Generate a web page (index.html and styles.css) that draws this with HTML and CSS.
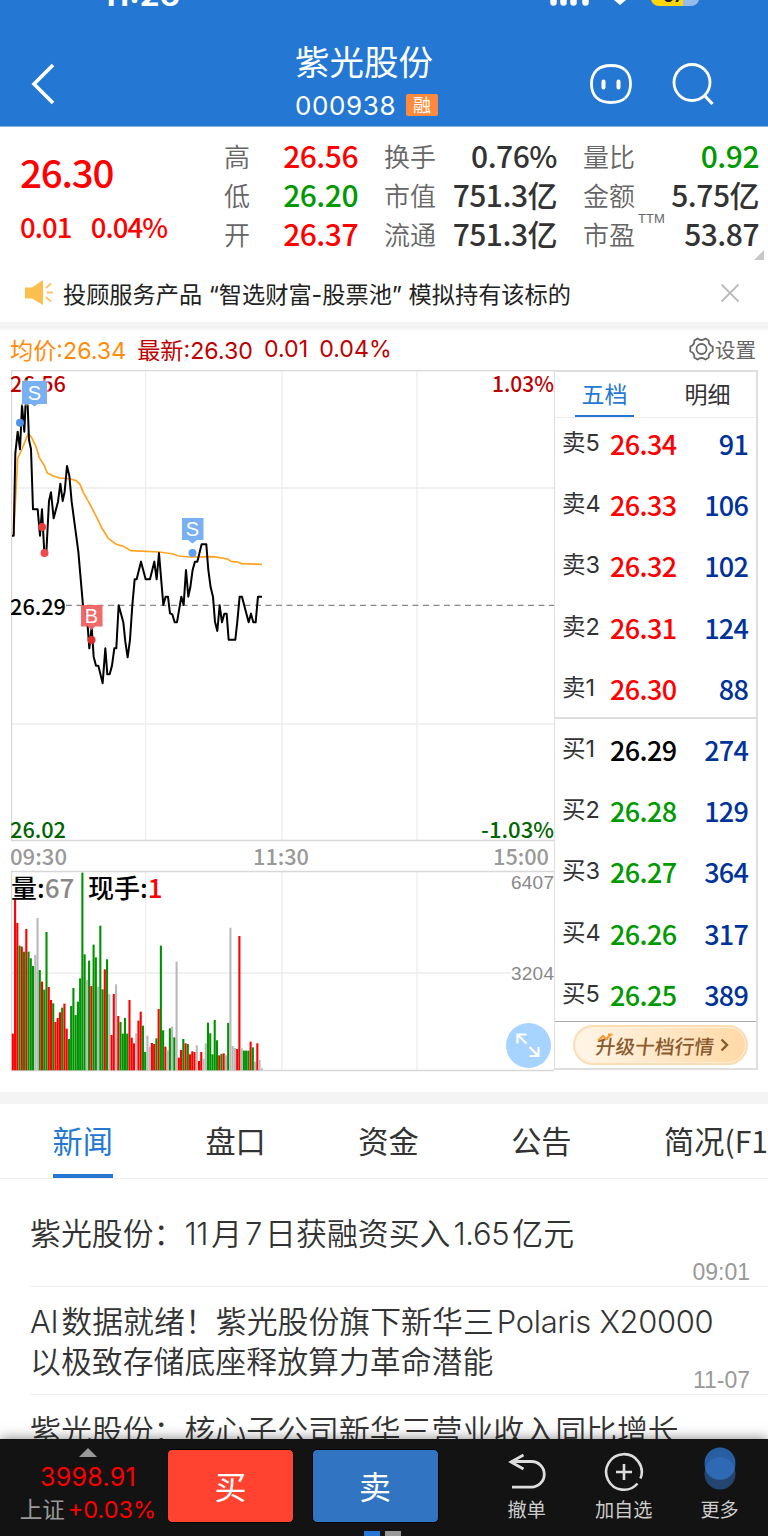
FILE: index.html
```html
<!DOCTYPE html>
<html lang="zh-CN">
<head>
    <meta charset="UTF-8">
    <meta name="viewport" content="width=device-width, initial-scale=1.0">
    <title>紫光股份 000938</title>
    <link rel="stylesheet" href="styles.css">
</head>
<body>
    <header class="header">
        <svg class="status" width="768" height="20" viewBox="0 0 768 20">
            <text class="clock" x="102" y="6" textLength="78" lengthAdjust="spacingAndGlyphs">11:26</text>
            <path d="M553.500 0v2.500M563.500 0v2.500M573.500 0v2.500M585.500 0v2.500" stroke="#fff" stroke-width="6.500" stroke-linecap="round"/>
            <path d="M614 0h12l-6 5z" fill="#fff"/>
            <path d="M651 0h32v6h-23q-7 0-9-6z" fill="#ffd60a"/>
            <path d="M683 0h16q-2 6-9 6h-7z" fill="#94bdea"/>
            <text class="battery" x="663" y="1.500">57</text>
        </svg>
        <div class="header-row">
            <svg class="back" width="26" height="42" viewBox="0 0 26 42"><path d="M23 2 4 21l19 19" fill="none" stroke="#fff" stroke-width="3.600"/></svg>
            <div class="title">
                <h1>紫光股份</h1>
                <p><span class="code">000938</span><span class="tag">融</span></p>
            </div>
            <svg class="robot" width="44" height="42" viewBox="0 0 44 42">
                <path d="M22 2.500c13 0 19.500 7 19.500 18.500S35 39.500 22 39.500 2.500 32.500 2.500 21 9 2.500 22 2.500z" fill="none" stroke="#fff" stroke-width="2.800"/>
                <path d="M14.500 18.500v6M29.500 18.500v6" stroke="#fff" stroke-width="4" stroke-linecap="round"/>
            </svg>
            <svg class="search" width="44" height="44" viewBox="0 0 44 44">
                <circle cx="21" cy="20.500" r="18" fill="none" stroke="#fff" stroke-width="2.800"/>
                <path d="M33.500 33.500 41.500 42" stroke="#fff" stroke-width="3.200"/>
            </svg>
        </div>
    </header>

    <section class="quote">
        <div class="quote-main">
            <div class="price num up">26.30</div>
            <div class="change num up"><span>0.01</span><span>0.04%</span></div>
        </div>
        <dl class="stats">
            <dt>高</dt><dd class="num up">26.56</dd><dt>换手</dt><dd class="num">0.76%</dd><dt>量比</dt><dd class="num down">0.92</dd>
            <dt>低</dt><dd class="num down">26.20</dd><dt>市值</dt><dd class="num">751.3亿</dd><dt>金额</dt><dd class="num">5.75亿</dd>
            <dt>开</dt><dd class="num up">26.37</dd><dt>流通</dt><dd class="num">751.3亿</dd><dt>市盈<sup>TTM</sup></dt><dd class="num">53.87</dd>
        </dl>
        <span class="corner"></span>
    </section>

    <div class="notice">
        <svg width="30" height="28" viewBox="0 0 30 28">
            <path d="M1 8.500h7L19 1v25L8 19.500H1z" fill="#fbbf50"/>
            <path d="M22.500 8.500 26.500 5M23.500 13.500h4.500M22.500 18.500l4 3.500" stroke="#fbc766" stroke-width="2" stroke-linecap="round"/>
        </svg>
        <span class="notice-text">投顾服务产品 <q>“智选财富-股票池”</q> 模拟持有该标的</span>
        <svg class="close" width="20" height="20" viewBox="0 0 20 20"><path d="M1.500 1.500l17 17M18.500 1.500l-17 17" stroke="#bbb" stroke-width="1.800"/></svg>
    </div>

    <section class="trend">
        <div class="trend-head">
            <span class="avg">均价:26.34</span>
            <span class="last">最新:26.30</span>
            <span class="last">0.01</span>
            <span class="last">0.04%</span>
            <span class="setting">
                <svg width="25" height="24" viewBox="0 0 25 24" fill="none" stroke="#666" stroke-width="1.800">
                    <path d="M8.500 1.500q4 3 8 0l3.200 2q-.5 4.500 4 6v5q-4.500 1.500-4 6l-3.200 2q-4-3-8 0l-3.200-2q.5-4.500-4-6v-5q4.500-1.500 4-6z" stroke-linejoin="round"/>
                    <circle cx="12.500" cy="12" r="5"/>
                </svg>设置</span>
        </div>
        <div class="trend-body">
            <svg class="chart" width="543" height="702" viewBox="11 370 543 702">
                <g stroke="#ededed" stroke-width="1.300">
                    <path d="M145.500 370v470M282 370v470M417 370v470M11 488h543M11 724h543"/>
                    <path d="M145.500 871v200M282 871v200M417 871v200M11 973h500"/>
                </g>
                <path d="M11 370.500h543M11.500 370v470M11 840.500h543M11 871.500h543M11.500 871v200M11 1070.500h543" stroke="#d8d8d8" stroke-width="1.400"/>
                <path d="M66 605.300h488" stroke="#888" stroke-width="1.300" stroke-dasharray="6 4.500"/>

                <g class="din">
                    <text x="10" y="391.500" fill="#c00000" textLength="56" lengthAdjust="spacingAndGlyphs">26.56</text>
                    <text x="492" y="391.500" fill="#c00000" textLength="62" lengthAdjust="spacingAndGlyphs">1.03%</text>
                    <text x="10" y="615" fill="#000" textLength="56" lengthAdjust="spacingAndGlyphs">26.29</text>
                    <text x="10" y="838" fill="#006400" textLength="56" lengthAdjust="spacingAndGlyphs">26.02</text>
                    <text x="481" y="838" fill="#006400" textLength="73" lengthAdjust="spacingAndGlyphs">-1.03%</text>
                    <text x="10" y="865" fill="#999" textLength="57" lengthAdjust="spacingAndGlyphs">09:30</text>
                    <text x="253" y="865" fill="#999" textLength="56" lengthAdjust="spacingAndGlyphs">11:30</text>
                    <text x="493" y="865" fill="#999" textLength="56" lengthAdjust="spacingAndGlyphs">15:00</text>
                </g>

                <!-- price and average lines -->
                <g transform="translate(0 325) scale(.3333)" fill="none" stroke-linejoin="round">
                    <polyline class="line-avg" points="41,632 53,400 66,372 85,325 95,338 108,365 118,398 132,420 142,444 160,453 180,459 213,462 228,467 240,478 250,503 270,538 290,577 306,610 325,640 349,658 370,664 392,677 478,681 520,687 535,693 570,696 640,695 683,702 693,709 713,711 725,716 786,718"/>
                    <polyline class="line-price" points="36,632 41,632 46,385 53,320 60,373 66,240 73,320 80,162 87,345 93,372 99,553 113,553 120,632 126,553 133,684 139,684 147,528 153,502 161,580 174,530 181,476 188,528 194,500 201,423 208,452 215,530 235,680 249,841 256,866 262,890 268,970 275,905 281,995 288,1022 295,1022 308,1075 316,970 322,1048 329,1048 336,1022 343,970 349,970 356,841 370,892 376,950 383,997 390,945 397,841 404,763 410,763 423,710 437,763 450,763 463,710 470,763 477,684 490,840 497,815 504,815 510,865 517,868 524,892 531,892 544,815 551,840 558,735 565,815 571,787 578,735 585,710 592,710 605,658 619,658 625,735 632,787 639,815 645,890 652,918 659,841 666,892 673,866 680,866 686,944 706,944 712,890 719,815 726,815 746,892 753,866 760,892 767,892 774,815 786,815"/>
                </g>

                <!-- trade marks -->
                <circle cx="20" cy="422.700" r="4" fill="#4d94e8"/>
                <circle cx="192.500" cy="553" r="4" fill="#5c9fec"/>
                <circle cx="42" cy="527" r="4" fill="#e63c3c"/>
                <circle cx="44.500" cy="553" r="4" fill="#f04b4b"/>
                <circle cx="91.500" cy="640" r="4" fill="#d93030"/>
                <path d="M22 381h25v23h-9l-3.500 2.500-3.500-2.500h-9z" fill="#79b0f2" stroke="#fff" stroke-opacity=".5" stroke-width="3" paint-order="stroke"/>
                <path d="M182 518h21.500v22H197l-4.500 3.500-4.500-3.500h-6z" fill="#79b0f2"/>
                <path d="M81 605h21.500v21.500H95l-3.500 3.500-3.500-3.500h-7z" fill="#ef6262" fill-opacity=".95"/>
                <text class="mark" x="34.500" y="400">S</text>
                <text class="mark" x="192.500" y="535.500">S</text>
                <text class="mark" x="91.500" y="622.500">B</text>

                <g id="volume"></g>
                <text class="vol-label" x="11" y="898">量:<tspan class="vol-num" fill="#888">67</tspan></text>
                <text class="vol-label" x="88" y="898">现手:<tspan class="vol-num" fill="#f00">1</tspan></text>
                <text class="vol-axis" x="511" y="889" textLength="43">6407</text>
                <text class="vol-axis" x="511" y="980" textLength="43">3204</text>

                <circle cx="528.500" cy="1045.500" r="22.500" fill="#a6d3ff"/>
                <path d="M517.500 1043.500v-9h9M518 1035l8.500 8.500M538.500 1047v9h-9M538 1055.500l-8.500-8.500" fill="none" stroke="#fff" stroke-width="2.200"/>
            </svg>

            <div class="book">
                <div class="book-tabs"><span class="active">五档</span><span>明细</span></div>
                <ul class="sell">
                    <li><span>卖5</span><b class="num up">26.34</b><i class="num">91</i></li>
                    <li><span>卖4</span><b class="num up">26.33</b><i class="num">106</i></li>
                    <li><span>卖3</span><b class="num up">26.32</b><i class="num">102</i></li>
                    <li><span>卖2</span><b class="num up">26.31</b><i class="num">124</i></li>
                    <li><span>卖1</span><b class="num up">26.30</b><i class="num">88</i></li>
                </ul>
                <ul class="buy">
                    <li><span>买1</span><b class="num">26.29</b><i class="num">274</i></li>
                    <li><span>买2</span><b class="num down">26.28</b><i class="num">129</i></li>
                    <li><span>买3</span><b class="num down">26.27</b><i class="num">364</i></li>
                    <li><span>买4</span><b class="num down">26.26</b><i class="num">317</i></li>
                    <li><span>买5</span><b class="num down">26.25</b><i class="num">389</i></li>
                </ul>
                <div class="upgrade">
                    <div class="upgrade-btn"><span>升级十档行情</span>
                        <svg width="9" height="14" viewBox="0 0 9 14"><path d="M1.500 1.500 7 7l-5.500 5.500" fill="none" stroke="#8a5a2e" stroke-width="2.400"/></svg>
                        <svg class="spark" width="17" height="9" viewBox="0 0 17 9"><path d="M1 7.500 6 3l3 3 5-4.500M11 1.500h4.500" fill="none" stroke="#f79a2e" stroke-width="2"/></svg>
                    </div>
                </div>
            </div>
        </div>
    </section>

    <nav class="tabs">
        <span class="active">新闻</span><span>盘口</span><span>资金</span><span>公告</span><span>简况(F10)</span>
    </nav>

    <section class="news">
        <article class="one"><h2>紫光股份：<em>11</em>月<em>7</em>日获融资买入<em>1.65</em>亿元</h2><time>09:01</time></article>
        <article class="two"><h2><em>AI</em>数据就绪！紫光股份旗下新华三<em>Polaris X20000</em><br>以极致存储底座释放算力革命潜能</h2><time>11-07</time></article>
        <article class="three"><h2>紫光股份：核心子公司新华三营业收入同比增长</h2></article>
    </section>

    <footer class="bottom">
        <div class="index">
            <span class="arrow"></span>
            <div class="index-value">3998.91</div>
            <div class="index-name">上证<span>+0.03%</span></div>
        </div>
        <div class="btn buy-btn">买</div>
        <div class="btn sell-btn">卖</div>
        <div class="action undo">
            <svg width="38" height="40" viewBox="0 0 38 40" fill="none" stroke="#ddd" stroke-width="2.800"><path d="M15.500 3 3 10l12.500 7M3 9.500h20.500a12.800 12.800 0 0 1 0 25.600H4"/></svg>
            <span>撤单</span>
        </div>
        <div class="action add">
            <svg width="40" height="40" viewBox="0 0 40 40" fill="none" stroke="#ddd" stroke-width="2.600"><path d="M33.500 31.500A17.800 17.800 0 1 1 36.500 26.500M20 12v16M12 20h16"/></svg>
            <span>加自选</span>
        </div>
        <div class="action more">
            <svg width="32" height="44" viewBox="0 0 32 44"><circle cx="16" cy="27" r="15.500" fill="#23456f"/><circle cx="16" cy="16" r="15.500" fill="#265e9f"/><path d="M1 21.500a15.500 15.500 0 0 1 30 0 15.500 15.500 0 0 1-30 0z" fill="#2f6cb5" fill-opacity=".9"/></svg>
            <span>更多</span>
        </div>
        <div class="pager"><span></span><span></span></div>
    </footer>

    <script>
        // one entry per minute: colour and bar height in thirds of a pixel
        const volumes = 'r110 r513 r442 g374 r371 g356 r424 g356 g336 g313 n346 n457 g301 r266 g242 g415 r250 r211 g201 r145 r157 r174 g188 r200 r125 g94 g193 g247 g166 g206 g276 g593 g348 n271 g329 r253 g377 g339 n251 g434 g243 r303 g333 n228 r106 r229 n258 r163 g145 g110 g157 g110 r211 r98 r81 n111 r149 r176 g134 g55 n104 n71 r82 r79 g96 r184 g374 g120 r71 n60 g126 n131 g99 n326 r38 r61 g94 r81 g79 r48 r57 r55 n75 r28 r55 n35 n81 g143 g111 g48 g151 g90 r45 g49 r51 n45 g142 n428 n73 n67 r64 r403 n66 g59 g59 g59 r86 g69 n26 r81 n31 n6';
        const colors = { r: '#f00', g: '#009300', n: '#b9b9b9' };
        const group = document.getElementById('volume');
        volumes.split(' ').forEach(function(item, i) {
            const bar = document.createElementNS('http://www.w3.org/2000/svg', 'rect');
            const height = Number(item.slice(1)) / 3;
            bar.setAttribute('x', 11.8 + i * 2.243);
            bar.setAttribute('y', 1070.3 - height);
            bar.setAttribute('width', 2.1);
            bar.setAttribute('height', height);
            bar.setAttribute('fill', colors[item[0]]);
            group.appendChild(bar);
        });
    </script>
</body>
</html>
```
FILE: styles.css
```css
* {
    box-sizing: border-box;
    margin: 0;
    padding: 0;
}
body {
    width: 768px;
    height: 1536px;
    overflow: hidden;
    background-color: #fff;
    color: #333;
    font-family: "Noto Sans CJK SC", sans-serif;
    display: flex;
    flex-direction: column;
}
svg {
    display: block;
    flex: none;
}
.num {
    font-family: "Noto Sans CJK SC", sans-serif;
    font-weight: 500;
    font-style: normal;
}
.up {
    color: #f00;
}
.down {
    color: #009900;
}

/* header */
.header {
    height: 127px;
    flex: none;
    background-color: #2478d4;
    border-bottom: 1px solid #8fb2d9;
    color: #fff;
}
.clock {
    font: bold 28px Inter, sans-serif;
    fill: #fff;
}
.battery {
    font: bold 17px Inter, sans-serif;
    fill: #222;
}
.header-row {
    display: flex;
    align-items: flex-start;
    padding-left: 30px;
}
.back {
    margin-top: 43px;
}
.title {
    width: 160px;
    margin: 20px 0 0 239px;
}
.title h1 {
    font-size: 34.500px;
    font-weight: 400;
    line-height: 40px;
    white-space: nowrap;
}
.title p {
    display: flex;
    align-items: center;
    height: 50px;
}
.code {
    width: 111px;
    font-family: Inter, sans-serif;
    font-size: 26px;
    letter-spacing: .6px;
}
.tag {
    width: 32px;
    height: 22px;
    background-color: #ff8a3c;
    border-radius: 2px;
    font-size: 18px;
    line-height: 21px;
    text-align: center;
}
.robot {
    margin: 43px 0 0 134px;
}
.search {
    margin: 42px 0 0 38px;
}

/* quote */
.quote {
    position: relative;
    display: flex;
    height: 138px;
    flex: none;
    padding: 9px 9px 0 20px;
}
.quote-main {
    width: 204px;
}
.price {
    font-size: 38.500px;
    line-height: 48px;
    letter-spacing: -1.200px;
    margin-top: 11px;
}
.change {
    display: flex;
    gap: 19px;
    margin-top: 17px;
    font-size: 27.500px;
    line-height: 28px;
    letter-spacing: -.9px;
}
.stats {
    flex: 1;
    display: grid;
    grid-template-columns: 42px 92px 78px 121px 79px 1fr;
    grid-auto-rows: 39px;
    line-height: 39px;
    white-space: nowrap;
}
.stats dt {
    color: #666;
    font-size: 26px;
    font-weight: 350;
}
.stats dt:nth-of-type(3n+2),
.stats dt:nth-of-type(3n) {
    padding-left: 26px;
}
.stats dd {
    font-size: 30px;
    letter-spacing: -.5px;
    text-align: right;
}
.stats sup {
    position: absolute;
    margin: -2px 0 0 3px;
    font-family: "Liberation Sans", sans-serif;
    font-size: 13px;
    line-height: 14px;
}
.corner {
    position: absolute;
    right: 4px;
    bottom: 5px;
    border: 5px solid transparent;
    border-right-color: #c8c8c8;
    border-bottom-color: #c8c8c8;
}

/* notice */
.notice {
    display: flex;
    align-items: center;
    height: 65px;
    flex: none;
    padding: 0 28px 2px 24px;
    border-bottom: 8px solid #f4f4f4;
    color: #222;
    font-size: 23.200px;
}
.notice-text {
    margin-left: 9px;
    font-family: Inter, "Noto Sans CJK SC", sans-serif;
    white-space: nowrap;
}
.notice q {
    quotes: none;
}
.close {
    margin-left: auto;
}

/* trend */
.trend {
    height: 774px;
    flex: none;
    border-bottom: 12px solid #f4f4f4;
}
.trend-head {
    display: flex;
    align-items: center;
    height: 40px;
    padding: 0 12px 2px 10px;
    font-family: Inter, "Noto Sans CJK SC", sans-serif;
    font-size: 23.200px;
    white-space: nowrap;
}
.avg {
    color: #ff8c0a;
    margin-right: 11px;
}
.last {
    color: #c00000;
    margin-right: 11px;
}
.setting {
    display: flex;
    align-items: center;
    gap: 1px;
    margin-left: auto;
    color: #666;
    font-size: 20.500px;
}
.trend-body {
    display: flex;
    padding-left: 11px;
}
.din {
    font: 500 22px "Noto Sans CJK SC", sans-serif;
}
.line-avg {
    stroke: #ffa31f;
    stroke-width: 5;
}
.line-price {
    stroke: #000;
    stroke-width: 6;
}
.mark {
    font: 20px "Liberation Sans", sans-serif;
    fill: #fff;
    text-anchor: middle;
}
.vol-label {
    font: 500 26px "Noto Sans CJK SC", sans-serif;
}
.vol-num {
    font: 500 26px "Noto Sans CJK SC", sans-serif;
}
.vol-axis {
    font: 19px "Liberation Sans", sans-serif;
    fill: #888;
}

/* order book */
.book {
    width: 204px;
    height: 700px;
    border: 2px solid #dedede;
    border-left-width: 1px;
}
.book-tabs {
    display: flex;
    gap: 44px;
    height: 46px;
    padding-left: 20px;
    border-bottom: 1px solid #eee;
    font-size: 23px;
    line-height: 43px;
    text-align: center;
}
.book-tabs span {
    width: 59px;
}
.book-tabs .active {
    color: #2478d4;
    border-bottom: 2px solid #2478d4;
}
.book ul {
    list-style: none;
}
.book li {
    display: flex;
    height: 61.200px;
    padding: 0 8px 0 7px;
    line-height: 51px;
}
.sell {
    height: 301px;
    overflow: hidden;
    border-bottom: 2px solid #ddd;
}
.buy {
    height: 303px;
    padding-top: 5px;
    overflow: hidden;
    border-bottom: 1px solid #aaa;
}
.book li span {
    width: 48px;
    font-family: Inter, "Noto Sans CJK SC", sans-serif;
    font-size: 23.500px;
    line-height: 50px;
}
.book li b {
    font-size: 27px;
    letter-spacing: -.6px;
}
.book li i {
    margin-left: auto;
    color: #003399;
    font-size: 27px;
    letter-spacing: -.8px;
}
.buy b:not(.down) {
    color: #000;
}
.upgrade {
    padding: 3px 0 0 18px;
}
.upgrade-btn {
    position: relative;
    display: flex;
    align-items: center;
    gap: 6px;
    width: 175px;
    height: 40px;
    padding-left: 21px;
    border: 2px solid #fcdcb4;
    border-radius: 20px;
    background: linear-gradient(90deg, #fff5e8, #ffd9a6);
    box-shadow: inset 0 0 0 1px #fff0dc;
    color: #8a5a2e;
    font-size: 19.700px;
    font-weight: 500;
    white-space: nowrap;
}
.upgrade-btn span {
    transform: skewX(-7deg);
}
.spark {
    position: absolute;
    left: 22px;
    top: 6px;
}

/* tabs */
.tabs {
    display: flex;
    gap: 92.500px;
    height: 75px;
    flex: none;
    padding-left: 52.500px;
    border-bottom: 1px solid #eee;
    font-size: 30.200px;
    line-height: 73px;
    white-space: nowrap;
}
.tabs span {
    flex: none;
}
.tabs .active {
    color: #2478d4;
    border-bottom: 4px solid #2478d4;
}

/* news */
.news {
    flex: 1;
    min-height: 0;
    overflow: hidden;
    padding-left: 30px;
}
.news article {
    display: flex;
    justify-content: space-between;
    border-bottom: 1px solid #eee;
}
.news h2 {
    font-size: 30.900px;
    font-weight: 350;
    line-height: 37.500px;
    white-space: nowrap;
}
.news em {
    margin: 0 3px;
    font-family: Inter, sans-serif;
    font-style: normal;
    letter-spacing: -.3px;
}
.news em:first-child {
    margin-left: 0;
}
.news time {
    align-self: flex-end;
    padding-right: 18px;
    color: #999;
    font-family: "Liberation Sans", sans-serif;
    font-size: 23px;
    line-height: 28px;
}
.one {
    height: 108px;
    padding-top: 34px;
}
.two {
    height: 108px;
    padding-top: 14px;
}
.two time {
    margin-left: -80px;
}
.three {
    padding-top: 15px;
}

/* bottom bar */
.bottom {
    position: relative;
    display: flex;
    height: 97px;
    flex: none;
    background-color: #131313;
    box-shadow: 0 0 12px rgba(0, 0, 0, .5);
    color: #ccc;
}
.index {
    display: flex;
    flex-direction: column;
    align-items: center;
    width: 167px;
    padding: 9px 0 0 9px;
    font-family: Inter, "Noto Sans CJK SC", sans-serif;
}
.arrow {
    border: 9px solid transparent;
    border-top: 0;
    border-bottom-color: #999;
}
.index-value {
    color: #f00;
    font-size: 25px;
    line-height: 32px;
    margin-top: 4px;
    letter-spacing: .3px;
}
.index-name {
    color: #999;
    font-size: 22.500px;
    line-height: 34px;
    white-space: nowrap;
}
.index-name span {
    margin-left: 3px;
    color: #f00;
    font-size: 23.500px;
}
.btn {
    width: 127px;
    height: 74px;
    margin-top: 10px;
    border: 1px solid #000;
    border-radius: 5px;
    color: #fff;
    font-size: 32px;
    line-height: 70px;
    text-align: center;
}
.buy-btn {
    background-color: #ff4330;
}
.sell-btn {
    margin-left: 17.500px;
    background-color: #3074c2;
}
.action {
    display: flex;
    flex-direction: column;
    align-items: center;
    justify-content: flex-end;
    height: 84px;
    font-size: 19.200px;
    line-height: 28px;
    white-space: nowrap;
}
.action svg {
    margin-bottom: 3px;
}
.undo {
    margin-left: 69px;
}
.add {
    margin-left: 49px;
}
.more {
    margin-left: 48px;
}
.more svg {
    margin-bottom: 4px;
}
.pager {
    position: absolute;
    left: 364px;
    bottom: 0;
    display: flex;
    gap: 5px;
}
.pager span {
    width: 16px;
    height: 5px;
    background-color: #2478d4;
}
.pager span:last-child {
    background-color: #999;
}
```
